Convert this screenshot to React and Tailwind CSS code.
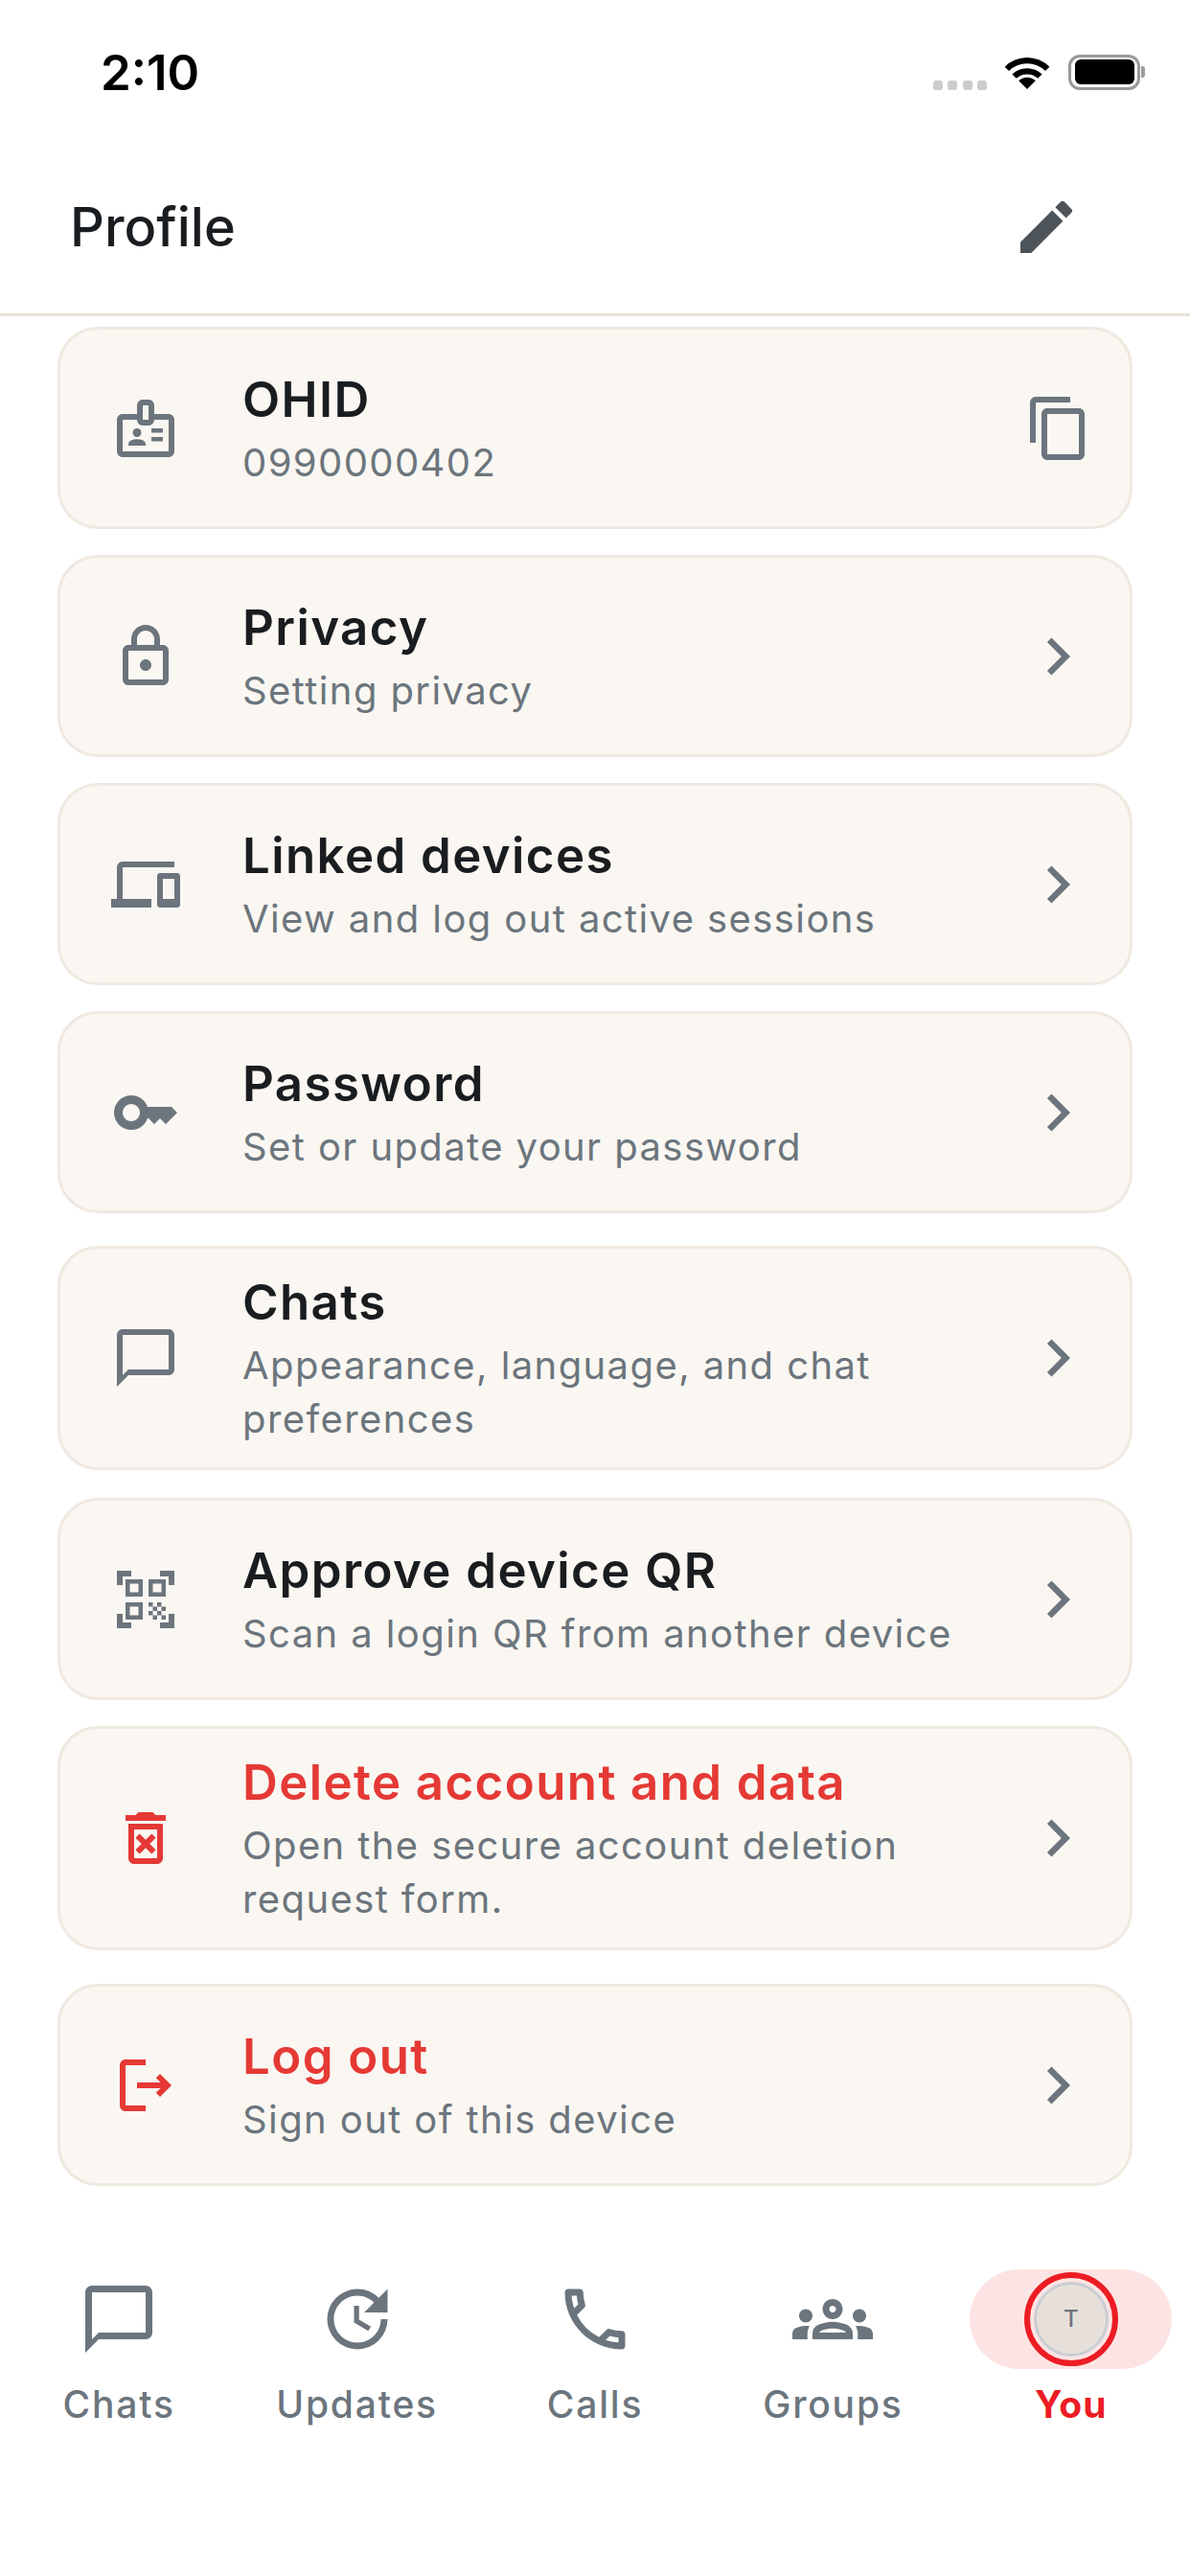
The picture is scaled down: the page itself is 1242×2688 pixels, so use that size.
import React from "react";
import {
  MdOutlineBadge, MdOutlineLock, MdOutlineDevices, MdOutlineKey, MdChatBubbleOutline,
  MdQrCodeScanner, MdOutlineDeleteForever, MdOutlineLogout, MdOutlineContentCopy,
  MdEdit, MdChevronRight, MdOutlineUpdate, MdOutlineCall, MdOutlineGroups,
} from "react-icons/md";

const rows = [
  { icon: MdOutlineBadge, title: "OHID", sub: "0990000402", copy: true, cls: "mt-[11px]" },
  { icon: MdOutlineLock, title: "Privacy", sub: "Setting privacy", cls: "mt-[27px]" },
  { icon: MdOutlineDevices, title: "Linked devices", sub: "View and log out active sessions", cls: "mt-[27px]" },
  { icon: MdOutlineKey, title: "Password", sub: "Set or update your password", cls: "mt-[27px]" },
  { icon: MdChatBubbleOutline, title: "Chats", sub: "Appearance, language, and chat preferences", cls: "mt-[34px]" },
  { icon: MdQrCodeScanner, title: "Approve device QR", sub: "Scan a login QR from another device", cls: "mt-[29px]" },
  { icon: MdOutlineDeleteForever, title: "Delete account and data", sub: "Open the secure account deletion request form.", danger: true, cls: "mt-[27px]" },
  { icon: MdOutlineLogout, title: "Log out", sub: "Sign out of this device", danger: true, cls: "mt-[35px]" },
];

function Row({ icon: Icon, title, sub, copy, danger, cls }) {
  return (
    <div className={`${cls} flex min-h-[211px] items-center rounded-[42px] border-[3px] border-[#efe9e0] bg-[#faf7f2] py-[22px] pl-[53px] pr-[42px]`}>
      <Icon className={`h-[72px] w-[72px] shrink-0 ${danger ? "text-[#e53935]" : "text-[#6c757d]"}`} />
      <div className="ml-[65px] min-w-0 flex-1 pr-[40px]">
        <div className={`text-[51px] leading-[68px] font-semibold tracking-[1.4px] ${danger ? "text-[#e53935]" : "text-[#1a1d20]"}`}>{title}</div>
        <div className="mt-[4px] text-[40px] leading-[56px] tracking-[1.4px] text-[#6c757d]">{sub}</div>
      </div>
      {copy ? (
        <MdOutlineContentCopy className="-mr-[4px] h-[72px] w-[72px] shrink-0 text-[#6c757d]" />
      ) : (
        <MdChevronRight className="-mr-[6px] h-[78px] w-[78px] shrink-0 text-[#6c757d]" />
      )}
    </div>
  );
}

function Tab({ icon: Icon, label }) {
  return (
    <div className="flex flex-col items-center">
      <div className="flex h-[104px] items-center justify-center">
        <Icon className="h-[84px] w-[84px] text-[#6c757d]" />
      </div>
      <div className="mt-[12px] text-[39px] leading-[50px] font-medium tracking-[1.8px] text-[#6c757d]">{label}</div>
    </div>
  );
}

export default function App() {
  return (
    <div className="h-[2688px] w-[1242px] overflow-hidden bg-white font-['Inter',sans-serif]">
      <div className="flex h-[150px] items-center justify-between pr-[47px] pl-[105px]">
        <div className="mt-[2px] text-[51px] font-semibold text-black">2:10</div>
        <div className="flex items-center">
          <div className="mt-[28px] mr-[17px] flex gap-[5.5px]">
            <div className="h-[10px] w-[10px] rounded-[3px] bg-[#cccccc]" />
            <div className="h-[10px] w-[10px] rounded-[3px] bg-[#cccccc]" />
            <div className="h-[10px] w-[10px] rounded-[3px] bg-[#cccccc]" />
            <div className="h-[10px] w-[10px] rounded-[3px] bg-[#cccccc]" />
          </div>
          <svg width="50" height="37" viewBox="0 0 50 38" className="mr-[18px]">
            <path d="M25 37 L16 28 A13 13 0 0 1 34 28 Z" fill="#000" />
            <path d="M9 21 A23 23 0 0 1 41 21 L36.500 25.500 A17 17 0 0 0 13.500 25.500 Z" fill="#000" />
            <path d="M1 13 A34 34 0 0 1 49 13 L44.500 17.500 A28 28 0 0 0 5.500 17.500 Z" fill="#000" />
          </svg>
          <div className="flex h-[37px] w-[75px] items-center justify-center rounded-[12px] border-[3px] border-[#9a9a9a]">
            <div className="h-[26px] w-[62px] rounded-[6px] bg-black" />
          </div>
          <div className="ml-[1px] h-[12px] w-[4px] rounded-r-[3px] bg-[#9a9a9a]" />
        </div>
      </div>
      <div className="flex h-[180px] items-center justify-between border-b-[3px] border-[#e8e3da] pr-[114px] pb-[4px] pl-[73px]">
        <div className="text-[56px] font-medium text-[#1a1d20]">Profile</div>
        <MdEdit className="h-[72px] w-[72px] text-[#4c5359]" />
      </div>
      <div className="px-[60px]">
        {rows.map((r) => (
          <Row key={r.title} {...r} />
        ))}
      </div>
      <div className="mt-[87px] grid grid-cols-5">
        <Tab icon={MdChatBubbleOutline} label="Chats" />
        <Tab icon={MdOutlineUpdate} label="Updates" />
        <Tab icon={MdOutlineCall} label="Calls" />
        <Tab icon={MdOutlineGroups} label="Groups" />
        <div className="flex flex-col items-center">
          <div className="flex h-[104px] w-[211px] items-center justify-center rounded-full bg-[#fde4e4]">
            <div className="flex h-[98px] w-[98px] items-center justify-center rounded-full border-[6px] border-[#ed1c24]">
              <div className="flex h-[78px] w-[78px] items-center justify-center rounded-full border-[3px] border-[#c9ced3] bg-[#e7e0da] text-[24px] font-medium text-[#6c757d]">T</div>
            </div>
          </div>
          <div className="mt-[12px] text-[39px] leading-[50px] font-bold tracking-[1px] text-[#ed1c24]">You</div>
        </div>
      </div>
    </div>
  );
}
